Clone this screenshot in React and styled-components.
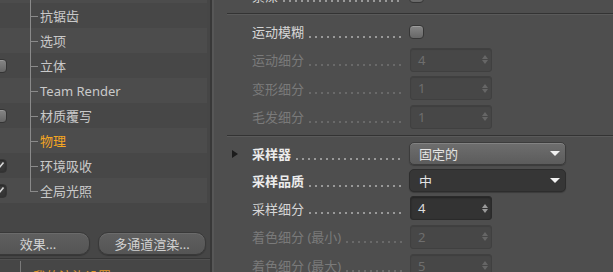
import React from "react";
import styled, { createGlobalStyle } from "styled-components";

const Global = createGlobalStyle`
  html, body { margin: 0; padding: 0; background: #464646; overflow: hidden; }
  body { font-family: "Noto Sans", "Noto Sans CJK SC", sans-serif; font-size: 13px; }
  * { box-sizing: border-box; }
`;

const Page = styled.div`
  display: flex;
  width: 613px;
  height: 272px;
  overflow: hidden;
`;

/* ---------- left panel ---------- */
const LeftPanel = styled.div`
  width: 210px;
  flex: none;
  background: #464646;
  overflow: hidden;
  display: flex;
  flex-direction: column;
`;

const TreeList = styled.div`
  margin-top: -22px;
  width: 207px;
  display: flex;
  flex-direction: column;
`;

const TreeRow = styled.div`
  display: flex;
  align-items: center;
  height: 25px;
  background: ${(p) => (p.$alt ? "#4c4c4c" : "#474747")};
`;

const CheckSlot = styled.div`
  width: 40px;
  margin-left: -10px;
  padding-left: 2px;
  display: flex;
  align-items: center;
  height: 100%;
`;

const Check = styled.span`
  width: 15px;
  height: 14px;
  border-radius: 4px;
  border: 1px solid #353535;
  display: flex;
  align-items: center;
  justify-content: center;
  background: ${(p) =>
    p.$checked ? "linear-gradient(#3e3e3e, #343434)" : "linear-gradient(#858585, #666)"};
  box-shadow: ${(p) => (p.$checked ? "inset 0 1px 2px rgba(0,0,0,.4)" : "inset 0 1px 0 rgba(255,255,255,.18)")};
`;

const Branch = styled.div`
  position: relative;
  width: 10px;
  height: 100%;
  flex: none;
  &::before {
    content: "";
    position: absolute;
    left: 0;
    top: 0;
    width: 1px;
    height: ${(p) => (p.$last ? "50%" : "100%")};
    background: #8a8a8a;
  }
  &::after {
    content: "";
    position: absolute;
    left: 0;
    top: 50%;
    width: 8px;
    height: 1px;
    background: #8a8a8a;
  }
`;

const TreeLabel = styled.span`
  color: ${(p) => (p.$active ? "#f5a623" : "#c9c9c9")};
  white-space: nowrap;
`;

const ButtonBar = styled.div`
  display: flex;
  gap: 8px;
  margin-top: 29px;
  margin-left: -14px;
`;

const Button = styled.div`
  width: ${(p) => p.$w}px;
  height: 23px;
  border-radius: 10px;
  border: 1px solid #393939;
  background: linear-gradient(#5f5f5f, #555);
  box-shadow: inset 0 1px 0 rgba(255, 255, 255, 0.08), 0 1px 1px rgba(0, 0, 0, 0.25);
  color: #d2d2d2;
  display: flex;
  align-items: center;
  justify-content: center;
  white-space: nowrap;
`;

const HLine = styled.div`
  height: 2px;
  margin-top: 3px;
  border-top: 1px solid #363636;
  border-bottom: 1px solid #505050;
`;

const BottomList = styled.div`
  padding-left: 20px;
  margin-top: 1px;
`;

const BottomItem = styled.div`
  border-left: 1px solid #7a7a7a;
  padding: 3px 0 0 12px;
  height: 25px;
  display: flex;
  align-items: center;
  color: #e0962a;
  white-space: nowrap;
`;

const Divider = styled.div`
  width: 4px;
  flex: none;
  background: linear-gradient(to right, #383838 0 2px, #575757 2px 4px);
`;

/* ---------- right panel ---------- */
const RightPanel = styled.div`
  flex: 1;
  background: #4e4e4e;
  overflow: hidden;
  display: flex;
  flex-direction: column;
`;

const Content = styled.div`
  margin-top: -18px;
  display: flex;
  flex-direction: column;
`;

const Separator = styled.div`
  height: 2px;
  margin: 4px 0 3px 13px;
  border-top: 1px solid #333;
  border-bottom: 1px solid #5a5a5a;
`;

const Row = styled.div`
  display: flex;
  align-items: center;
  height: ${(p) => p.$h}px;
  padding-left: 18px;
`;

const Marker = styled.div`
  width: 20px;
  flex: none;
  display: flex;
  align-items: center;
`;

const Triangle = styled.span`
  width: 0;
  height: 0;
  border-top: 4px solid transparent;
  border-bottom: 4px solid transparent;
  border-left: 6px solid #1c1c1c;
`;

const LabelCell = styled.div`
  width: 157px;
  flex: none;
  display: flex;
  align-items: center;
  height: 100%;
`;

const Label = styled.span`
  white-space: nowrap;
  color: ${(p) => (p.$dim ? "#7a7a7a" : p.$strong ? "#ececec" : "#d6d6d6")};
  font-weight: ${(p) => (p.$strong ? 700 : 400)};
`;

const Leader = styled.span`
  flex: 1;
  align-self: center;
  height: 2px;
  margin: 10px 6px 0 3px;
  background-image: radial-gradient(circle, ${(p) => (p.$dim ? "#696969" : "#9a9a9a")} 0.7px, transparent 1.1px);
  background-size: 6px 2px;
  background-repeat: repeat-x;
`;

const Box = styled.span`
  width: 15px;
  height: 14px;
  border-radius: 4px;
  border: 1px solid #363636;
  background: linear-gradient(#868686, #676767);
  box-shadow: inset 0 1px 0 rgba(255, 255, 255, 0.2);
`;

const NumField = styled.div`
  width: 82px;
  height: 24px;
  margin-left: 1px;
  border-radius: 3px;
  display: flex;
  align-items: center;
  padding: 0 3px 0 7px;
  border: 1px solid ${(p) => (p.$dim ? "#404040" : "#2a2a2a")};
  background: ${(p) => (p.$dim ? "#474747" : "#333333")};
  box-shadow: ${(p) => (p.$dim ? "inset 0 1px 1px rgba(0,0,0,.12)" : "inset 0 1px 2px rgba(0,0,0,.35)")};
  color: ${(p) => (p.$dim ? "#6e6e6e" : "#dedede")};
`;

const Spin = styled.span`
  margin-left: auto;
  display: flex;
  flex-direction: column;
  gap: 1px;
`;

const SpinUp = styled.span`
  width: 0;
  height: 0;
  border-left: 3px solid transparent;
  border-right: 3px solid transparent;
  border-bottom: 4px solid ${(p) => (p.$dim ? "#666" : "#9a9a9a")};
`;

const SpinDown = styled(SpinUp)`
  border-bottom: none;
  border-top: 4px solid ${(p) => (p.$dim ? "#666" : "#9a9a9a")};
`;

const Select = styled.div`
  width: 157px;
  height: 23px;
  border-radius: 5px;
  display: flex;
  align-items: center;
  padding: 0 5px 0 9px;
  color: #e4e4e4;
  border: 1px solid ${(p) => (p.$dark ? "#2d2d2d" : "#3c3c3c")};
  background: ${(p) => (p.$dark ? "#363636" : "linear-gradient(#6e6e6e, #5c5c5c)")};
  box-shadow: ${(p) =>
    p.$dark ? "0 1px 1px rgba(0,0,0,.25)" : "inset 0 1px 0 rgba(255,255,255,.15), 0 1px 1px rgba(0,0,0,.25)"};
`;

const Caret = styled.span`
  margin-left: auto;
  width: 0;
  height: 0;
  border-left: 5px solid transparent;
  border-right: 5px solid transparent;
  border-top: 5px solid #f2f2f2;
`;

const CheckMark = () => (
  <svg width="11" height="10" viewBox="0 0 11 10">
    <path d="M1.5 5.5 L4.2 8 L9.5 1.5" fill="none" stroke="#d8d8d8" strokeWidth="1.6" />
  </svg>
);

const treeItems = [
  { label: "多通道", check: "off" },
  { label: "抗锯齿" },
  { label: "选项" },
  { label: "立体", check: "off" },
  { label: "Team Render" },
  { label: "材质覆写", check: "off" },
  { label: "物理", active: true },
  { label: "环境吸收", check: "on" },
  { label: "全局光照", check: "on", last: true },
];

const Spinner = ({ dim }) => (
  <Spin>
    <SpinUp $dim={dim} />
    <SpinDown $dim={dim} />
  </Spin>
);

const Field = ({ label, h, dim, strong, marker, children }) => (
  <Row $h={h}>
    <Marker>{marker && <Triangle />}</Marker>
    <LabelCell>
      <Label $dim={dim} $strong={strong}>{label}</Label>
      <Leader $dim={dim} />
    </LabelCell>
    {children}
  </Row>
);

export default function App() {
  return (
    <>
      <Global />
      <Page>
        <LeftPanel>
          <TreeList>
            {treeItems.map((it, i) => (
              <TreeRow key={it.label} $alt={i % 2 === 0}>
                <CheckSlot>
                  {it.check && <Check $checked={it.check === "on"}>{it.check === "on" && <CheckMark />}</Check>}
                </CheckSlot>
                <Branch $last={it.last} />
                <TreeLabel $active={it.active}>{it.label}</TreeLabel>
              </TreeRow>
            ))}
          </TreeList>
          <ButtonBar>
            <Button $w={104}>效果...</Button>
            <Button $w={108}>多通道渲染...</Button>
          </ButtonBar>
          <HLine />
          <BottomList>
            <BottomItem>我的渲染设置</BottomItem>
          </BottomList>
        </LeftPanel>
        <Divider />
        <RightPanel>
          <Content>
            <Field label="景深" h={27}>
              <Box />
            </Field>
            <Separator />
            <Field label="运动模糊" h={27}>
              <Box />
            </Field>
            <Field label="运动细分" h={29} dim>
              <NumField $dim>4<Spinner dim /></NumField>
            </Field>
            <Field label="变形细分" h={28} dim>
              <NumField $dim>1<Spinner dim /></NumField>
            </Field>
            <Field label="毛发细分" h={29} dim>
              <NumField $dim>1<Spinner dim /></NumField>
            </Field>
            <Separator />
            <Field label="采样器" h={27} strong marker>
              <Select>固定的<Caret /></Select>
            </Field>
            <Field label="采样品质" h={27} strong>
              <Select $dark>中<Caret /></Select>
            </Field>
            <Field label="采样细分" h={28}>
              <NumField>4<Spinner /></NumField>
            </Field>
            <Field label="着色细分 (最小)" h={29} dim>
              <NumField $dim>2<Spinner dim /></NumField>
            </Field>
            <Field label="着色细分 (最大)" h={29} dim>
              <NumField $dim>5<Spinner dim /></NumField>
            </Field>
          </Content>
        </RightPanel>
      </Page>
    </>
  );
}
